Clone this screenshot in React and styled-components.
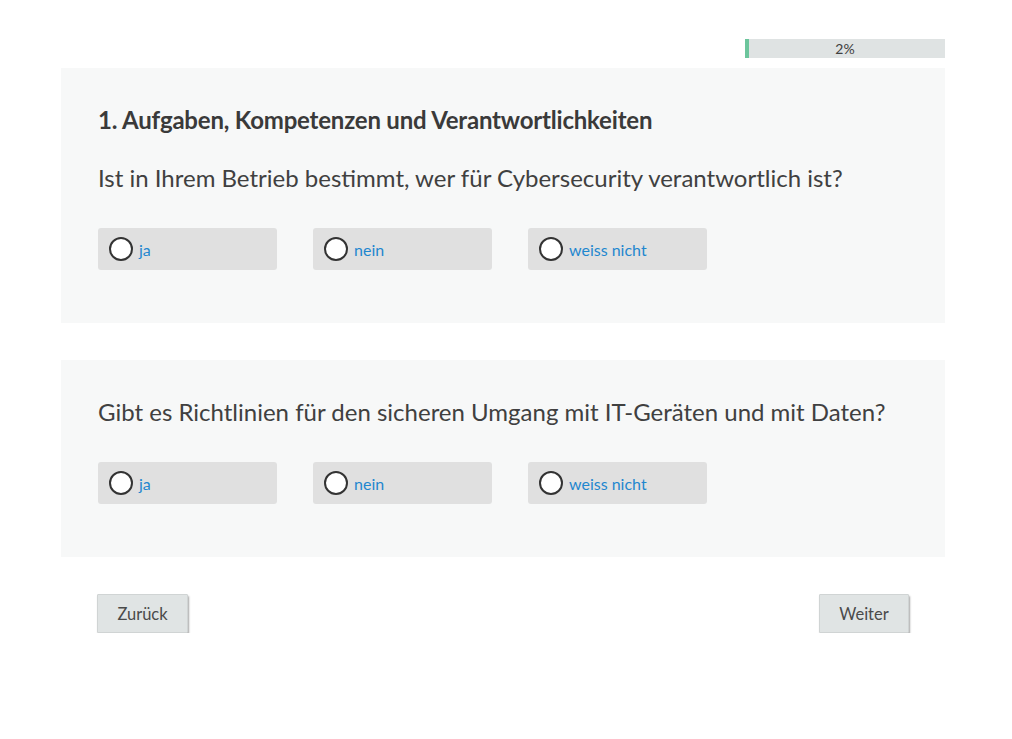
import React from "react";
import styled, { createGlobalStyle } from "styled-components";

const Global = createGlobalStyle`
  html, body { margin: 0; padding: 0; background: #fff; }
  body { font-family: Lato, "Open Sans", sans-serif; color: #404040; }
  * { box-sizing: border-box; }
`;

const Page = styled.div`
  width: 884px;
  margin-left: 61px;
  padding-top: 39px;
  display: flex;
  flex-direction: column;
`;

const ProgressRow = styled.div`
  display: flex;
  justify-content: flex-end;
  margin-bottom: 10px;
`;

const Progress = styled.div`
  position: relative;
  width: 200px;
  height: 19px;
  background: #dfe3e3;
  display: flex;
  align-items: center;
  justify-content: center;
  font-size: 14px;
  color: #404040;
`;

const ProgressFill = styled.div`
  position: absolute;
  left: 0;
  top: 0;
  bottom: 0;
  background: #6cc59c;
`;

const ProgressText = styled.span`
  position: relative;
  line-height: 19px;
`;

const Panel = styled.section`
  background: #f7f8f8;
  padding: 39px 37px 53px;
  margin-bottom: 37px;
`;

const Title = styled.h2`
  margin: 0 0 32px;
  font-size: 24px;
  font-weight: 700;
  line-height: 26px;
  color: #3a3a3a;
  letter-spacing: -0.2px;
`;

const Question = styled.p`
  margin: 0 0 37px;
  font-size: 24px;
  line-height: 26px;
  color: #404040;
`;

const Options = styled.div`
  display: flex;
  gap: 36px;
`;

const Option = styled.label`
  width: 179px;
  height: 42px;
  background: #e0e0e0;
  border-radius: 3px;
  display: flex;
  align-items: center;
  padding-left: 11px;
  gap: 6px;
  cursor: pointer;
`;

const Radio = styled.span`
  width: 24px;
  height: 24px;
  border-radius: 50%;
  border: 2px solid #333;
  background: #fff;
  flex: none;
`;

const OptionLabel = styled.span`
  font-size: 16px;
  color: #1f87cf;
`;

const Nav = styled.div`
  display: flex;
  justify-content: space-between;
  padding: 0 36px;
`;

const Button = styled.button`
  height: 39px;
  width: ${(p) => p.$w}px;
  background: #e0e4e4;
  border: 1px solid #d0d4d4;
  border-radius: 1px;
  box-shadow: 1px 2px 2px rgba(0, 0, 0, 0.35);
  font-family: Lato, sans-serif;
  font-size: 16.5px;
  color: #4a4a4a;
  cursor: pointer;
`;

const opts = ["ja", "nein", "weiss nicht"];

function QuestionBlock({ title, question }) {
  return (
    <Panel>
      {title && <Title>{title}</Title>}
      <Question>{question}</Question>
      <Options>
        {opts.map((o) => (
          <Option key={o}>
            <Radio />
            <OptionLabel>{o}</OptionLabel>
          </Option>
        ))}
      </Options>
    </Panel>
  );
}

export default function App() {
  return (
    <>
      <Global />
      <Page>
        <ProgressRow>
          <Progress>
            <ProgressFill style={{ width: "2%" }} />
            <ProgressText>2%</ProgressText>
          </Progress>
        </ProgressRow>
        <QuestionBlock
          title="1. Aufgaben, Kompetenzen und Verantwortlichkeiten"
          question="Ist in Ihrem Betrieb bestimmt, wer für Cybersecurity verantwortlich ist?"
        />
        <QuestionBlock question="Gibt es Richtlinien für den sicheren Umgang mit IT-Geräten und mit Daten?" />
        <Nav>
          <Button $w={91}>Zurück</Button>
          <Button $w={90}>Weiter</Button>
        </Nav>
      </Page>
    </>
  );
}
